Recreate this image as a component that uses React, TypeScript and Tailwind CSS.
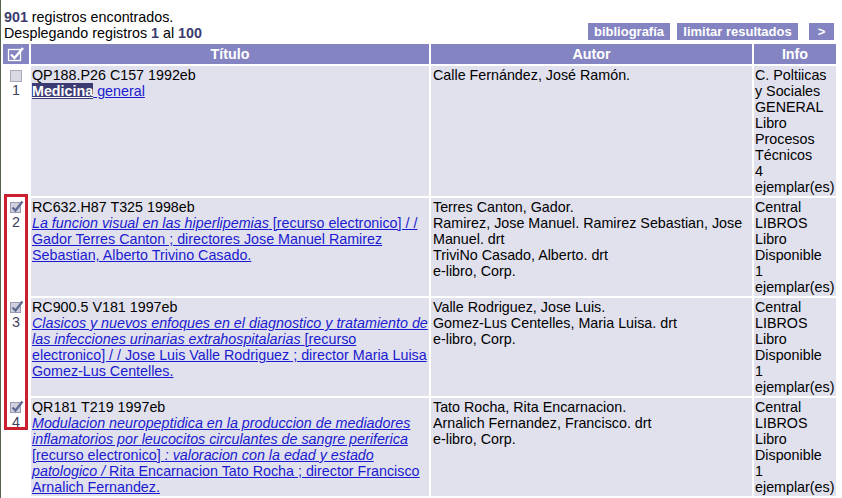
import React from 'react';

type Row = {
  n: number;
  checked: boolean;
  signatura: string;
  titulo: React.ReactNode;
  autores: string[];
  info: string[];
};

const CheckedBox: React.FC = () => (
  <svg width="15" height="14" viewBox="0 0 15 14" className="block mx-auto">
    <rect x="1.5" y="2.5" width="10" height="10" fill="#cfcfdd" stroke="#9a9ab2" />
    <path d="M3.5 7.5 L6.5 10.5 L13.5 1.5" fill="none" stroke="#5d6a92" strokeWidth="2.2" />
  </svg>
);

const EmptyBox: React.FC = () => (
  <svg width="15" height="14" viewBox="0 0 15 14" className="block mx-auto">
    <rect x="1.5" y="2.5" width="11" height="11" fill="#d9d9e3" stroke="#a9a9bb" />
  </svg>
);

const HeaderBox: React.FC = () => (
  <svg width="18" height="16" viewBox="0 0 18 16" className="block mx-auto">
    <rect x="1.5" y="3.5" width="12" height="11" fill="none" stroke="#ffffff" strokeWidth="1.3" />
    <path d="M4 8.5 L7.5 12 L16 2" fill="none" stroke="#ffffff" strokeWidth="2.4" />
  </svg>
);

const linkCls = 'text-[#1a1ad0] underline';

const rows: Row[] = [
  {
    n: 1,
    checked: false,
    signatura: 'QP188.P26 C157 1992eb',
    titulo: (
      <>
        <span className="bg-[#3c3c74] text-white font-bold underline">Medicina</span>
        <span className={linkCls}> general</span>
      </>
    ),
    autores: ['Calle Fernández, José Ramón.'],
    info: ['C. Poltiicas', 'y Sociales', 'GENERAL', 'Libro', 'Procesos', 'Técnicos', '4', 'ejemplar(es)'],
  },
  {
    n: 2,
    checked: true,
    signatura: 'RC632.H87 T325 1998eb',
    titulo: (
      <span className={linkCls}>
        <i>La funcion visual en las hiperlipemias</i> [recurso electronico] / /<br />
        Gador Terres Canton ; directores Jose Manuel Ramirez<br />
        Sebastian, Alberto Trivino Casado.
      </span>
    ),
    autores: [
      'Terres Canton, Gador.',
      'Ramirez, Jose Manuel. Ramirez Sebastian, Jose Manuel. drt',
      'TriviNo Casado, Alberto. drt',
      'e-libro, Corp.',
    ],
    info: ['Central', 'LIBROS', 'Libro', 'Disponible', '1', 'ejemplar(es)'],
  },
  {
    n: 3,
    checked: true,
    signatura: 'RC900.5 V181 1997eb',
    titulo: (
      <span className={linkCls}>
        <i>
          Clasicos y nuevos enfoques en el diagnostico y tratamiento de<br />
          las infecciones urinarias extrahospitalarias
        </i>{' '}
        [recurso<br />
        electronico] / / Jose Luis Valle Rodriguez ; director Maria Luisa<br />
        Gomez-Lus Centelles.
      </span>
    ),
    autores: ['Valle Rodriguez, Jose Luis.', 'Gomez-Lus Centelles, Maria Luisa. drt', 'e-libro, Corp.'],
    info: ['Central', 'LIBROS', 'Libro', 'Disponible', '1', 'ejemplar(es)'],
  },
  {
    n: 4,
    checked: true,
    signatura: 'QR181 T219 1997eb',
    titulo: (
      <span className={linkCls}>
        <i>
          Modulacion neuropeptidica en la produccion de mediadores<br />
          inflamatorios por leucocitos circulantes de sangre periferica
        </i>
        <br />
        [recurso electronico] <i>: valoracion con la edad y estado<br />
        patologico /</i> Rita Encarnacion Tato Rocha ; director Francisco<br />
        Arnalich Fernandez.
      </span>
    ),
    autores: ['Tato Rocha, Rita Encarnacion.', 'Arnalich Fernandez, Francisco. drt', 'e-libro, Corp.'],
    info: ['Central', 'LIBROS', 'Libro', 'Disponible', '1', 'ejemplar(es)'],
  },
  {
    n: 5,
    checked: true,
    signatura: 'RC387 C318 1996eb',
    titulo: <span className={linkCls}><i>Estudio clinico</i></span>,
    autores: ['García Fernández, José Luis.'],
    info: ['Central', 'LIBROS'],
  },
];

const App: React.FC = () => {
  return (
    <div className="relative w-[842px] h-[498px] overflow-hidden bg-white border-l border-[#58634e] text-black text-[14.3px] leading-[16px] font-['Liberation_Sans',Arial,sans-serif]">
      <div className="flex items-end justify-between pt-[9px] pl-[3px] pr-[8px]">
        <div>
          <div>
            <b className="text-[#3b3b6e]">901</b> registros encontrados.
          </div>
          <div>
            Desplegando registros <b className="text-[#3b3b6e]">1</b> al <b className="text-[#3b3b6e]">100</b>
          </div>
        </div>
        <div className="flex mb-[1px] text-[13px] leading-[17px] font-bold text-white">
          <span className="bg-[#8484c2] w-[82px] text-center h-[17px]">bibliografía</span>
          <span className="bg-[#8484c2] w-[121px] text-center h-[17px] ml-[7px]">limitar resultados</span>
          <span className="bg-[#8484c2] w-[25px] text-center h-[17px] ml-[11px]">&gt;</span>
        </div>
      </div>

      <table className="mt-[1px] w-[837px] table-fixed border-separate border-spacing-[2px]">
        <colgroup>
          <col className="w-[26px]" />
          <col className="w-[398px]" />
          <col className="w-[321px]" />
          <col className="w-[82px]" />
        </colgroup>
        <thead>
          <tr className="bg-[#8484c2] text-white font-bold">
            <th className="py-[2px]">
              <HeaderBox />
            </th>
            <th className="py-[2px] text-center">Título</th>
            <th className="py-[2px] text-center">Autor</th>
            <th className="py-[2px] text-center">Info</th>
          </tr>
        </thead>
        <tbody>
          {rows.map((r) => (
            <tr key={r.n} className="align-top">
              <td className="bg-white pt-[2px] text-center">
                {r.checked ? <CheckedBox /> : <EmptyBox />}
                <div className="text-[#3e3e5e] leading-[16px]">{r.n}</div>
              </td>
              <td className="bg-[#e1e1ee] px-[1px] py-[1px] whitespace-nowrap">
                <div>{r.signatura}</div>
                <div>{r.titulo}</div>
              </td>
              <td className="bg-[#e1e1ee] px-[2px] py-[1px]">
                {r.autores.map((a) => (
                  <div key={a}>{a}</div>
                ))}
              </td>
              <td className="bg-[#e1e1ee] px-[1px] py-[1px] whitespace-nowrap">
                {r.info.map((i, k) => (
                  <div key={k}>{i}</div>
                ))}
              </td>
            </tr>
          ))}
        </tbody>
      </table>

      <div className="absolute left-[3px] top-[194px] w-[24px] h-[236px] border-[3px] border-[#cc2030] pointer-events-none" />
    </div>
  );
};

export default App;
